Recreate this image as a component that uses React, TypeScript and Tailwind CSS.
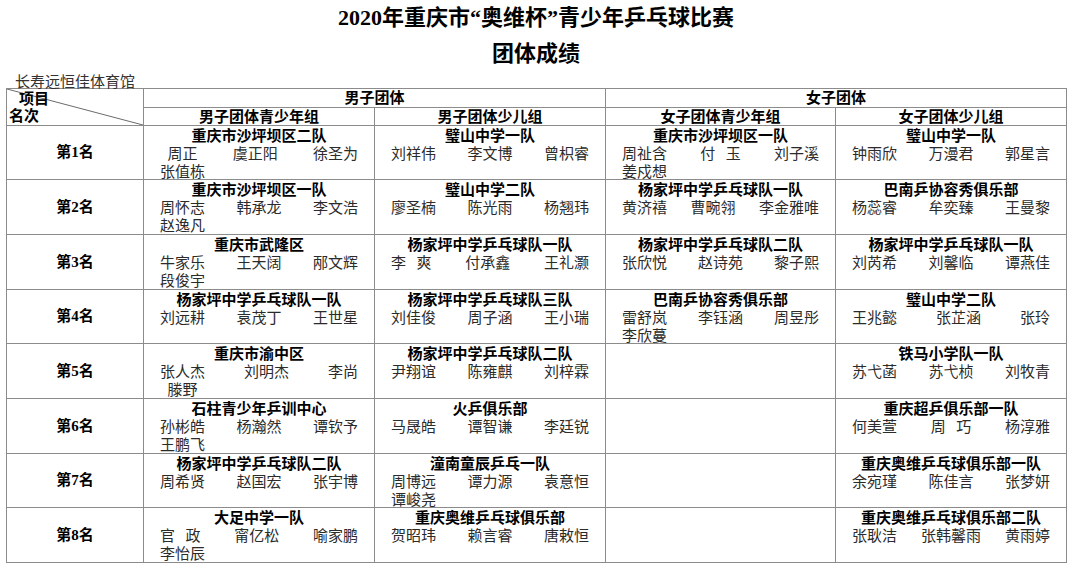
import React from "react";

type Team = { team: string; names: string[] } | null;
type Row = { rank: string; h: string; cells: Team[] };

const rows: Row[] = [
  {
    rank: "第1名",
    h: "h-[53px]",
    cells: [
      { team: "重庆市沙坪坝区二队", names: ["\u2002周正", "虞正阳", "徐圣为", "张值栋"] },
      { team: "璧山中学一队", names: ["刘祥伟", "李文博", "曾枳睿"] },
      { team: "重庆市沙坪坝区一队", names: ["周祉含", "付\u2002\u2009玉", "刘子溪", "姜戍想"] },
      { team: "璧山中学一队", names: ["钟雨欣", "万漫君", "郭星言"] },
    ],
  },
  {
    rank: "第2名",
    h: "h-[54px]",
    cells: [
      { team: "重庆市沙坪坝区一队", names: ["周怀志", "韩承龙", "李文浩", "赵逸凡"] },
      { team: "璧山中学二队", names: ["廖圣楠", "陈光雨", "杨翘玮"] },
      { team: "杨家坪中学乒乓球队一队", names: ["黄济禧", "曹畹翎", "李金雅唯"] },
      { team: "巴南乒协容秀俱乐部", names: ["杨蕊睿", "牟奕臻", "王曼黎"] },
    ],
  },
  {
    rank: "第3名",
    h: "h-[54px]",
    cells: [
      { team: "重庆市武隆区", names: ["牛家乐", "王天阔", "邴文辉", "段俊宇"] },
      { team: "杨家坪中学乒乓球队一队", names: ["李\u2002\u2009爽", "付承鑫", "王礼灏"] },
      { team: "杨家坪中学乒乓球队二队", names: ["张欣悦", "赵诗苑", "黎子熙"] },
      { team: "杨家坪中学乒乓球队一队", names: ["刘芮希", "刘馨临", "谭燕佳"] },
    ],
  },
  {
    rank: "第4名",
    h: "h-[53px]",
    cells: [
      { team: "杨家坪中学乒乓球队一队", names: ["刘远耕", "袁茂丁", "王世星"] },
      { team: "杨家坪中学乒乓球队三队", names: ["刘佳俊", "周子涵", "王小瑞"] },
      { team: "巴南乒协容秀俱乐部", names: ["雷舒岚", "李钰涵", "周昱彤", "李欣蔓"] },
      { team: "璧山中学二队", names: ["王兆懿", "张芷涵", "张玲"] },
    ],
  },
  {
    rank: "第5名",
    h: "h-[54px]",
    cells: [
      { team: "重庆市渝中区", names: ["张人杰", "刘明杰", "李尚", "\u2002滕野"] },
      { team: "杨家坪中学乒乓球队二队", names: ["尹翔谊", "陈雍麒", "刘梓霖"] },
      null,
      { team: "铁马小学队一队", names: ["苏弋菡", "苏弋桢", "刘牧青"] },
    ],
  },
  {
    rank: "第6名",
    h: "h-[54px]",
    cells: [
      { team: "石柱青少年乒训中心", names: ["孙彬皓", "杨瀚然", "谭钦予", "王鹏飞"] },
      { team: "火乒俱乐部", names: ["马晟皓", "谭智谦", "李廷锐"] },
      null,
      { team: "重庆超乒俱乐部一队", names: ["何美萱", "周\u2002\u2009巧", "杨淳雅"] },
    ],
  },
  {
    rank: "第7名",
    h: "h-[53px]",
    cells: [
      { team: "杨家坪中学乒乓球队二队", names: ["周希贤", "赵国宏", "张宇博"] },
      { team: "潼南童辰乒乓一队", names: ["周博远", "谭力源", "袁意恒", "谭峻尧"] },
      null,
      { team: "重庆奥维乒乓球俱乐部一队", names: ["余宛瑾", "陈佳言", "张梦妍"] },
    ],
  },
  {
    rank: "第8名",
    h: "h-[54px]",
    cells: [
      { team: "大足中学一队", names: ["官\u2002\u2009政", "甯亿松", "喻家鹏", "李怡辰"] },
      { team: "重庆奥维乒乓球俱乐部", names: ["贺昭玮", "赖言睿", "唐敕恒"] },
      null,
      { team: "重庆奥维乒乓球俱乐部二队", names: ["张耿洁", "张韩馨雨", "黄雨婷"] },
    ],
  },
];

function chunk(names: string[]) {
  const lines: string[][] = [];
  for (let i = 0; i < names.length; i += 3) lines.push(names.slice(i, i + 3));
  return lines;
}

function TeamCell({ data, h }: { data: Team; h: string }) {
  return (
    <td className="border border-[#8c8c8c] p-0 align-top">
      <div className={h + " overflow-visible px-[16px] pt-[1px]"}>
        {data && (
          <>
            <div className="whitespace-nowrap text-center font-bold leading-[18px] text-black">{data.team}</div>
            {chunk(data.names).map((line, i) => (
              <div key={i} className="flex justify-between whitespace-pre leading-[18px] text-[#2b2b2b]">
                {line.map((n, j) => (
                  <span key={j}>{n}</span>
                ))}
              </div>
            ))}
          </>
        )}
      </div>
    </td>
  );
}

export default function App() {
  return (
    <div className="h-[585px] w-[1080px] overflow-hidden bg-white font-[family-name:'Liberation_Sans','Noto_Sans_CJK_SC',sans-serif] text-[15px] text-[#222]">
      <div className="w-[1072px] pt-[6px] text-center font-[family-name:'Liberation_Serif','Noto_Sans_CJK_SC',serif] font-bold text-black">
        <h1 className="text-[22px] leading-[24px]">2020年重庆市“奥维杯”青少年乒乓球比赛</h1>
        <h2 className="mt-[10px] text-[22px] leading-[28px]">团体成绩</h2>
      </div>
      <div className="mt-[6px] h-[14px] pl-[15px] leading-[15px] text-[#333]">长寿远恒佳体育馆</div>
      <table className="ml-[6px] w-[1060px] table-fixed border-collapse border border-[#808080]">
        <colgroup>
          <col className="w-[137px]" />
          <col className="w-[231px]" />
          <col className="w-[231px]" />
          <col className="w-[230px]" />
          <col className="w-[231px]" />
        </colgroup>
        <thead>
          <tr>
            <th rowSpan={2} className="border border-[#8c8c8c] p-0 align-top">
              <div className="relative h-[36px] overflow-hidden font-bold text-black">
                <svg className="absolute inset-0 h-full w-full" preserveAspectRatio="none" viewBox="0 0 100 100">
                  <line x1="0" y1="0" x2="100" y2="100" stroke="#6b6b6b" strokeWidth="1" vectorEffect="non-scaling-stroke" />
                </svg>
                <span className="absolute left-[12px] top-[1px] leading-[18px]">项目</span>
                <span className="absolute left-[2px] top-[18px] leading-[18px]">名次</span>
              </div>
            </th>
            <th colSpan={2} className="border border-[#8c8c8c] p-0 font-semibold text-black">
              <div className="h-[18px] leading-[18px]">男子团体</div>
            </th>
            <th colSpan={2} className="border border-[#8c8c8c] p-0 font-semibold text-black">
              <div className="h-[18px] leading-[18px]">女子团体</div>
            </th>
          </tr>
          <tr>
            {["男子团体青少年组", "男子团体少儿组", "女子团体青少年组", "女子团体少儿组"].map((t) => (
              <th key={t} className="border border-[#8c8c8c] p-0 font-semibold text-black">
                <div className="h-[17px] leading-[17px]">{t}</div>
              </th>
            ))}
          </tr>
        </thead>
        <tbody>
          {rows.map((r) => (
            <tr key={r.rank}>
              <td className="border border-[#8c8c8c] p-0 align-middle">
                <div className={r.h + " flex items-center justify-center font-[family-name:'Liberation_Serif','Noto_Sans_CJK_SC',serif] font-bold text-black"}>
                  {r.rank}
                </div>
              </td>
              {r.cells.map((c, i) => (
                <TeamCell key={i} data={c} h={r.h} />
              ))}
            </tr>
          ))}
        </tbody>
      </table>
    </div>
  );
}
